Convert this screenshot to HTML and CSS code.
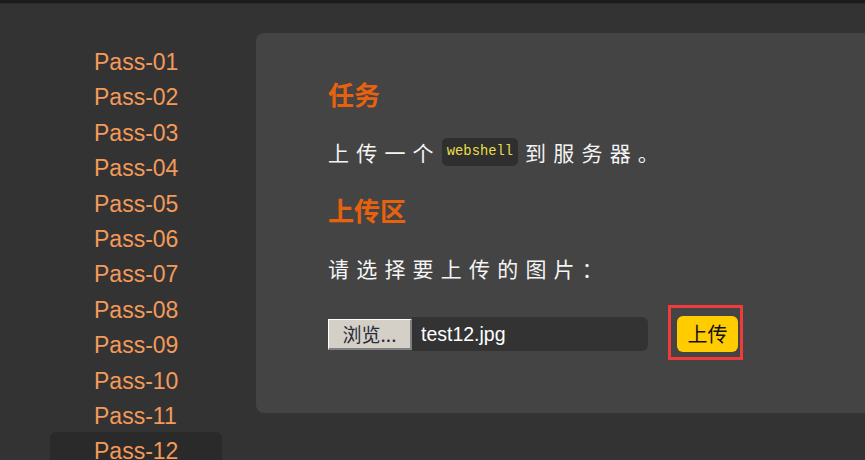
FILE: index.html
```html
<!DOCTYPE html>
<html lang="zh-CN">
<head>
<meta charset="utf-8">
<title>Upload-labs Pass-12</title>
<link rel="stylesheet" href="styles.css">
</head>
<body>
<div class="topbar"></div>
<div class="layout">
  <nav class="sidebar">
    <a class="item">Pass-01</a>
    <a class="item">Pass-02</a>
    <a class="item">Pass-03</a>
    <a class="item">Pass-04</a>
    <a class="item">Pass-05</a>
    <a class="item">Pass-06</a>
    <a class="item">Pass-07</a>
    <a class="item">Pass-08</a>
    <a class="item">Pass-09</a>
    <a class="item">Pass-10</a>
    <a class="item">Pass-11</a>
    <a class="item active">Pass-12</a>
  </nav>
  <main class="panel">
    <h2 class="title">任务</h2>
    <p class="text">上传一个<code class="code">webshell</code>到服务器。</p>
    <h2 class="title">上传区</h2>
    <p class="text">请选择要上传的图片：</p>
    <div class="form-row">
      <div class="file">
        <span class="file-btn">浏览...</span>
        <span class="file-name">test12.jpg</span>
      </div>
      <span class="submit-wrap">
        <span class="submit">上传</span>
      </span>
    </div>
  </main>
</div>
</body>
</html>
```

FILE: styles.css
```css
html, body {
  margin: 0;
  padding: 0;
  height: 100%;
  overflow: hidden;
}
body {
  background: #333333;
  font-family: "Liberation Sans", Arial, "Noto Sans CJK SC", sans-serif;
}
.topbar {
  height: 3px;
  background: #1c1c1c;
  border-bottom: 1px solid #2a2a2a;
}
.layout {
  display: flex;
  align-items: flex-start;
}
.sidebar {
  display: flex;
  flex-direction: column;
  width: 172px;
  margin-left: 50px;
  padding-top: 41px;
}
.item {
  display: block;
  height: 35.4px;
  line-height: 35.4px;
  padding-left: 44px;
  font-size: 23px;
  color: #f39a5a;
  border-radius: 6px;
}
.item.active {
  background: #2a2a2a;
  margin-top: -2px;
  padding-top: 2px;
}
.panel {
  flex: 1;
  margin-left: 34px;
  margin-top: 29px;
  background: #444444;
  border-radius: 8px 0 0 8px;
  padding: 44px 0 61px 72px;
  font-family: "Noto Sans CJK SC", sans-serif;
}
.title {
  margin: 0 0 24px 0;
  font-size: 26px;
  line-height: 34px;
  font-weight: 700;
  color: #e8620e;
}
.text {
  margin: 0 0 24px 0;
  font-size: 21px;
  line-height: 34px;
  letter-spacing: 7.2px;
  color: #f4f4f4;
  font-weight: 400;
  display: flex;
  align-items: center;
}
.code {
  display: inline-block;
  margin: 0 7px 0 1px;
  padding: 0 5px;
  height: 28px;
  line-height: 28px;
  border-radius: 5px;
  background: #2f2f2f;
  color: #e8de4a;
  font-family: "Liberation Mono", monospace;
  font-size: 13.8px;
  font-weight: 400;
  letter-spacing: 0;
}
.form-row {
  display: flex;
  align-items: center;
  margin-top: 31px;
  height: 36px;
}
.file {
  display: flex;
  align-items: center;
}
.file-btn {
  box-sizing: border-box;
  width: 84px;
  height: 31px;
  background: #d4d0c8;
  border-top: 1px solid #ffffff;
  border-left: 1px solid #ffffff;
  border-right: 2px solid #808080;
  border-bottom: 2px solid #808080;
  color: #2a2a3a;
  font-size: 19px;
  line-height: 28px;
  text-align: center;
}
.file-name {
  box-sizing: border-box;
  width: 236px;
  height: 34px;
  background: #333333;
  border-radius: 0 6px 6px 0;
  color: #ffffff;
  font-family: "Liberation Sans", Arial, sans-serif;
  font-size: 19.5px;
  line-height: 34px;
  padding-left: 9px;
}
.submit-wrap {
  position: relative;
  margin-left: 29px;
  display: inline-block;
}
.submit-wrap::after {
  content: "";
  position: absolute;
  left: -9px;
  right: -5px;
  top: -11px;
  bottom: -8px;
  border: 3px solid #ee3b3b;
}
.submit {
  display: block;
  box-sizing: border-box;
  width: 61px;
  height: 36px;
  background: #ffcc00;
  border-radius: 6px;
  color: #111111;
  font-size: 20px;
  font-weight: 400;
  line-height: 36px;
  text-align: center;
}
```
